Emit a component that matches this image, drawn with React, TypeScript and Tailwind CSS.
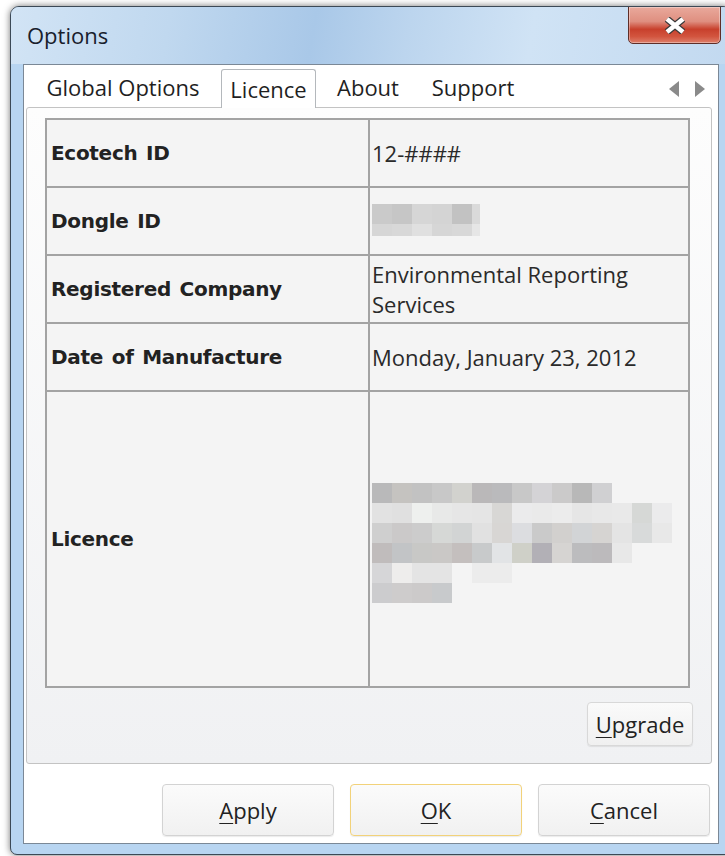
import React from "react";

// redacted values are drawn as grey pixel blocks, one class per block
const dongleRows: string[][] = [
  ["bg-[#cacaca]", "bg-[#c6c6c6]", "bg-[#d6d6d6]", "bg-[#d4d4d4]", "bg-[#c2c2c2]", "w-[8px] bg-[#dadada]"],
  ["bg-[#d6d6d6]", "bg-[#d8d8d8]", "bg-[#e0e0e0]", "bg-[#d6d6d6]", "bg-[#d8d8d8]", "w-[8px] bg-[#e6e6e6]"],
];

const licenceRows: string[][] = [
  ["bg-[#b9b9ba]", "bg-[#c5c3c0]", "bg-[#c2c2c2]", "bg-[#c8c8c8]", "bg-[#d2d2ce]", "bg-[#bab8b9]", "bg-[#bababc]", "bg-[#c8c8c8]", "bg-[#d4d3d6]", "bg-[#cbcaca]", "bg-[#b8b8b8]", "bg-[#d0d0d2]"],
  ["bg-[#e2e2e2]", "bg-[#e0e0e0]", "bg-[#eef0ee]", "bg-[#e8e9e8]", "bg-[#e6e6e6]", "bg-[#e5e5e5]", "bg-[#d8d7d5]", "bg-[#ebebec]", "bg-[#eaeaea]", "bg-[#ececec]", "bg-[#e6e6e6]", "bg-[#e8e8e8]", "bg-[#e9e9e9]", "bg-[#d6d8d6]", "bg-[#ebebec]"],
  ["bg-[#cfcfcf]", "bg-[#cbc9c9]", "bg-[#cccccc]", "bg-[#d6d8d6]", "bg-[#d2d4d4]", "bg-[#e1e1e1]", "bg-[#d8d6d4]", "bg-[#dcdde0]", "bg-[#cacaca]", "bg-[#d2d0ce]", "bg-[#d2d4d6]", "bg-[#d6d4d2]", "bg-[#e4e4e4]", "bg-[#d8dada]", "bg-[#e8e8e8]"],
  ["bg-[#c0bcbc]", "bg-[#c2c4c6]", "bg-[#c8c8c6]", "bg-[#cac8c6]", "bg-[#c4bfbe]", "bg-[#c8cacb]", "bg-[#e2e4e6]", "bg-[#cfd0c8]", "bg-[#b2b0b6]", "bg-[#d6d4d2]", "bg-[#bcbcbe]", "bg-[#bcbabc]", "bg-[#e8e8e8]"],
  ["bg-[#d6d6d8]", "bg-[#eeedec]", "bg-[#e4e4e4]", "bg-[#e4e4e4]", "bg-[#f4f4f4]", "bg-[#ececec]", "bg-[#ececec]"],
  ["bg-[#ccccce]", "bg-[#cecccc]", "bg-[#cccaca]", "bg-[#c8cacc]"],
];

function Mosaic({ rows, last }: { rows: string[][]; last?: string }) {
  return (
    <div className="flex flex-col">
      {rows.map((row, i) => (
        <div key={i} className={`flex ${i === rows.length - 1 && last ? last : "h-[20px]"}`}>
          {row.map((c, j) => (
            <div key={j} className={`h-full ${c.includes("w-[") ? c : "w-[20px] " + c}`} />
          ))}
        </div>
      ))}
    </div>
  );
}

function Label({ children }: { children: React.ReactNode }) {
  return (
    <div className="bg-[#f4f4f4] flex items-center pl-[4px] font-['DejaVu_Sans',sans-serif] font-bold text-[20px] text-[#222] [word-spacing:2px] tracking-[-0.3px]">
      {children}
    </div>
  );
}

function Value({ children }: { children: React.ReactNode }) {
  return (
    <div className="bg-[#f4f4f4] flex items-center pl-[2px] pr-[4px] text-[22px] leading-[30px] text-[#2a2a2a]">
      {children}
    </div>
  );
}

function DialogButton({
  label,
  accel,
  isDefault,
}: {
  label: string;
  accel: string;
  isDefault?: boolean;
}) {
  return (
    <button
      className={`w-[172px] h-[52px] rounded-[4px] border text-[22px] text-[#222] bg-[linear-gradient(#fbfbfb,#f1f1f1)] shadow-[0_1px_1px_rgba(0,0,0,0.08)] ${
        isDefault ? "border-[#f2d27a]" : "border-[#d3d3d3]"
      }`}
    >
      <span className="underline underline-offset-[4px] decoration-1">{accel}</span>
      {label.slice(1)}
    </button>
  );
}

export default function App() {
  const tabs = [
    { name: "Global Options", w: "w-[182px]" },
    { name: "Licence", w: "w-[95px]", active: true },
    { name: "About", w: "w-[104px]" },
    { name: "Support", w: "w-[106px]" },
  ];

  return (
    <main className="w-[725px] h-[856px] bg-white overflow-hidden pt-[6px] pl-[10px] font-['Open_Sans',sans-serif]">
      {/* window frame */}
      <div className="w-[722px] h-[849px] rounded-t-[9px] rounded-b-[7px] border border-[#3c4956] bg-[#b8d5f1] shadow-[0_0_7px_rgba(0,0,0,0.55)] flex flex-col overflow-hidden">
        {/* title bar */}
        <div className="h-[57px] flex items-center justify-between bg-[linear-gradient(100deg,#d2e4f5_0%,#c0d8ef_22%,#a9c8e8_42%,#bcd5ee_55%,#d0e3f5_72%,#c2d9f0_100%)]">
          <span className="pl-[16px] text-[22px] text-[#18202c]">Options</span>
          <div className="self-start -mt-[1px] mr-[10px] w-[93px] h-[38px] rounded-b-[5px] border border-[#5e2e28] bg-[linear-gradient(#e9a99c_0%,#df8f80_40%,#c8402c_62%,#d2553f_82%,#de7f6a_100%)] shadow-[inset_0_0_0_1px_rgba(255,255,255,0.35)] flex items-center justify-center">
            <svg width="24" height="17" viewBox="0 0 24 17">
              <path d="M4 2 L20 15 M20 2 L4 15" stroke="#3a3a3a" strokeWidth="7" strokeLinecap="butt" />
              <path d="M4 2 L20 15 M20 2 L4 15" stroke="#ffffff" strokeWidth="4.5" strokeLinecap="butt" />
            </svg>
          </div>
        </div>

        {/* client area */}
        <div className="mx-[12px] h-[780px] border border-[#7b8896] bg-white flex flex-col">
          {/* tab strip */}
          <div className="h-[42px] flex items-end pl-[8px] pr-[13px]">
            {tabs.map((t) =>
              t.active ? (
                <div
                  key={t.name}
                  className={`${t.w} ml-[7px] h-[39px] -mb-px relative z-10 flex items-center justify-center bg-white border border-b-0 border-[#b4b8bc] rounded-t-[3px] text-[22px] text-[#1f1f1f]`}
                >
                  {t.name}
                </div>
              ) : (
                <div
                  key={t.name}
                  className={`${t.w} h-[39px] flex items-center justify-center text-[22px] text-[#1f1f1f]`}
                >
                  {t.name}
                </div>
              )
            )}
            <div className="ml-auto self-center mt-[6px] flex gap-[16px]">
              <svg width="10" height="16" viewBox="0 0 10 16">
                <path d="M10 0 L0 8 L10 16 Z" fill="#8a8a8a" />
              </svg>
              <svg width="10" height="16" viewBox="0 0 10 16">
                <path d="M0 0 L10 8 L0 16 Z" fill="#8a8a8a" />
              </svg>
            </div>
          </div>

          {/* tab page */}
          <div className="ml-[2px] mr-[6px] h-[657px] border border-[#c3c3c3] rounded-[3px] bg-[linear-gradient(#fdfdfd,#f0f1f3)] pt-[10px] pl-[18px] flex flex-col">
            <div className="w-[645px] h-[570px] border-2 border-[#a3a3a3] bg-[#a3a3a3] grid grid-cols-[321px_318px] grid-rows-[66px_66px_66px_66px_294px] gap-[2px]">
              <Label>Ecotech ID</Label>
              <Value>12-####</Value>

              <Label>Dongle ID</Label>
              <div className="bg-[#f4f4f4] flex items-center pl-[2px] pb-[2px]">
                <Mosaic rows={dongleRows} last="h-[12px]" />
              </div>

              <Label>Registered Company</Label>
              <Value>Environmental Reporting Services</Value>

              <Label>Date of Manufacture</Label>
              <Value>Monday, January 23, 2012</Value>

              <Label>Licence</Label>
              <div className="bg-[#f4f4f4] flex items-center pl-[2px] pt-[8px]">
                <Mosaic rows={licenceRows} />
              </div>
            </div>

            <button className="self-end mt-[14px] mr-[18px] w-[106px] h-[44px] rounded-[4px] border border-[#d8d8d8] bg-[linear-gradient(#fafafa,#f0f0f0)] shadow-[0_1px_1px_rgba(0,0,0,0.08)] text-[22px] text-[#222]">
              <span className="underline underline-offset-[4px] decoration-1">U</span>pgrade
            </button>
          </div>

          {/* dialog buttons */}
          <div className="flex-1 flex justify-end items-start pt-[20px] pr-[8px] gap-[16px]">
            <DialogButton label="Apply" accel="A" />
            <DialogButton label="OK" accel="O" isDefault />
            <DialogButton label="Cancel" accel="C" />
          </div>
        </div>
      </div>
    </main>
  );
}
